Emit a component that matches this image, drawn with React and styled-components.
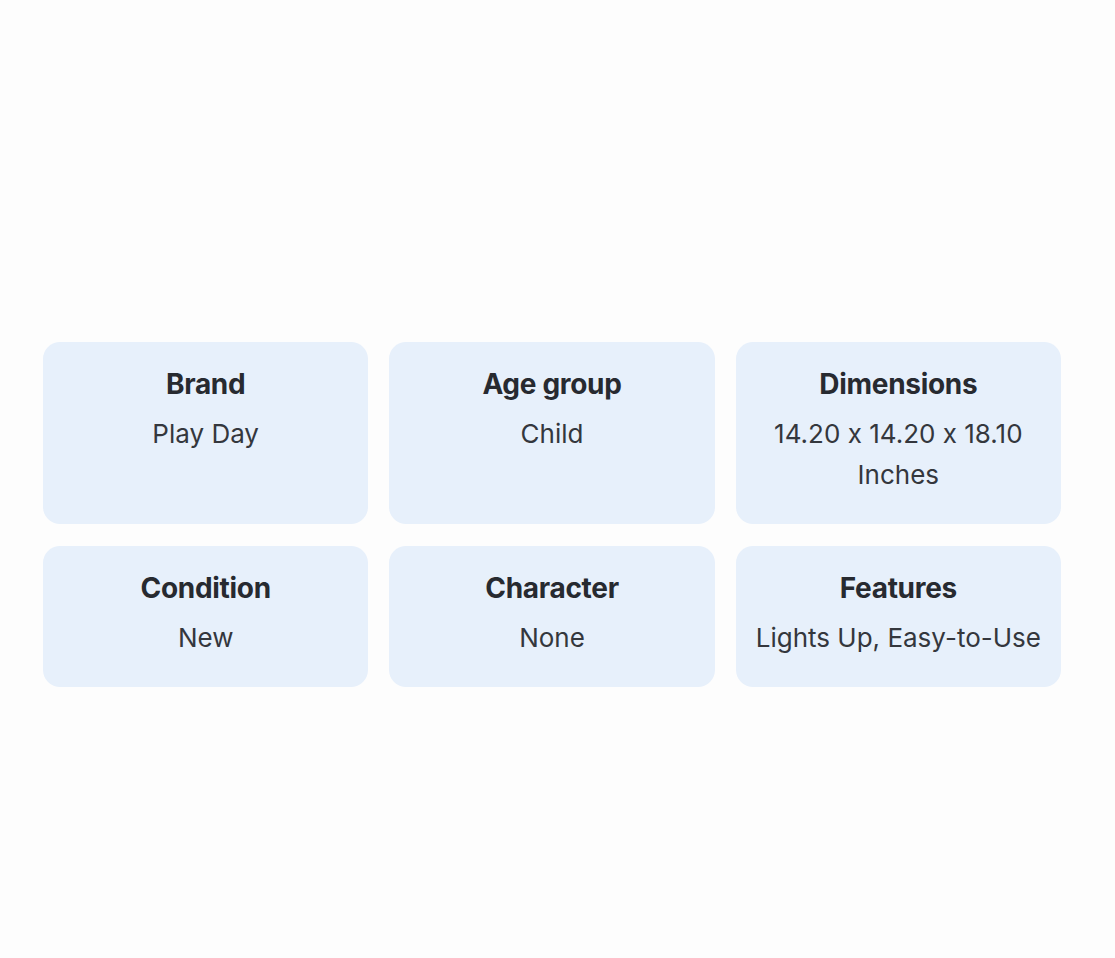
import styled, { createGlobalStyle } from "styled-components";

const GlobalStyle = createGlobalStyle`
  html, body {
    margin: 0;
    background: #fdfdfd;
  }
  body {
    font-family: Inter, "Noto Sans", "Liberation Sans", sans-serif;
    font-feature-settings: "calt" 0;
    color: #2b2e34;
  }
`;

const Page = styled.main`
  min-height: 958px;
  box-sizing: border-box;
  padding: 342px 54px 0 43px;
`;

const Grid = styled.section`
  display: grid;
  grid-template-columns: repeat(3, 1fr);
  column-gap: 21px;
  row-gap: 22px;
`;

const Card = styled.div`
  background: #e7f0fb;
  border-radius: 17px;
  padding: 24px 12px 29px;
  text-align: center;
`;

const Title = styled.h3`
  margin: 0 0 11px;
  font-size: 28px;
  line-height: 36px;
  font-weight: 700;
  letter-spacing: -0.3px;
  color: #272a30;
`;

const Value = styled.p`
  margin: 0;
  font-size: 26px;
  line-height: 41px;
  font-weight: 400;
  color: #34373d;
`;

const specs = [
  { title: "Brand", value: "Play Day" },
  { title: "Age group", value: "Child" },
  { title: "Dimensions", value: "14.20 x 14.20 x 18.10 Inches" },
  { title: "Condition", value: "New" },
  { title: "Character", value: "None" },
  { title: "Features", value: "Lights Up, Easy-to-Use" },
];

function App() {
  return (
    <>
      <GlobalStyle />
      <Page>
        <Grid>
          {specs.map((spec) => (
            <Card key={spec.title}>
              <Title>{spec.title}</Title>
              <Value>{spec.value}</Value>
            </Card>
          ))}
        </Grid>
      </Page>
    </>
  );
}

export default App;
